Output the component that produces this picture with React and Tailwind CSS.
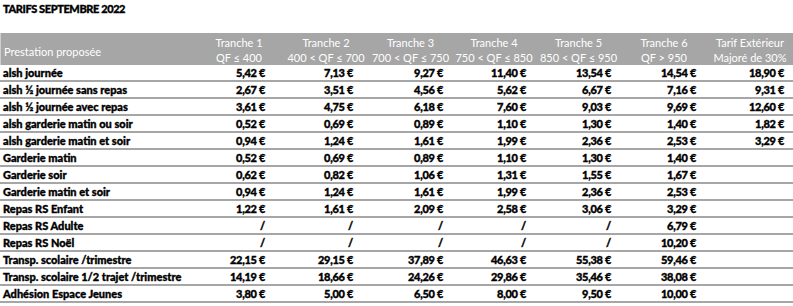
import React from 'react';

const cols = [
    { title: 'Tranche 1', sub: 'QF ≤ 400', w: 'w-[88px]', pad: 'pr-[18px]' },
    { title: 'Tranche 2', sub: '400 < QF ≤ 700', w: 'w-[86px]', pad: 'pr-[16px]' },
    { title: 'Tranche 3', sub: '700 < QF ≤ 750', w: 'w-[83px]', pad: 'pr-[9px]' },
    { title: 'Tranche 4', sub: '750 < QF ≤ 850', w: 'w-[84px]', pad: 'pr-[10px]' },
    { title: 'Tranche 5', sub: '850 < QF ≤ 950', w: 'w-[85px]', pad: 'pr-[10px]' },
    { title: 'Tranche 6', sub: 'QF > 950', w: 'w-[86px]', pad: 'pr-[11px]' },
    { title: 'Tarif Extérieur', sub: 'Majoré de 30%', w: 'w-[86px]', pad: 'pr-[9px]' },
];

const rows = [
    ['alsh journée', '5,42 €', '7,13 €', '9,27 €', '11,40 €', '13,54 €', '14,54 €', '18,90 €'],
    ['alsh ½ journée sans repas', '2,67 €', '3,51 €', '4,56 €', '5,62 €', '6,67 €', '7,16 €', '9,31 €'],
    ['alsh ½ journée avec repas', '3,61 €', '4,75 €', '6,18 €', '7,60 €', '9,03 €', '9,69 €', '12,60 €'],
    ['alsh garderie matin ou soir', '0,52 €', '0,69 €', '0,89 €', '1,10 €', '1,30 €', '1,40 €', '1,82 €'],
    ['alsh garderie matin et soir', '0,94 €', '1,24 €', '1,61 €', '1,99 €', '2,36 €', '2,53 €', '3,29 €'],
    ['Garderie matin', '0,52 €', '0,69 €', '0,89 €', '1,10 €', '1,30 €', '1,40 €', ''],
    ['Garderie soir', '0,62 €', '0,82 €', '1,06 €', '1,31 €', '1,55 €', '1,67 €', ''],
    ['Garderie matin et soir', '0,94 €', '1,24 €', '1,61 €', '1,99 €', '2,36 €', '2,53 €', ''],
    ['Repas RS Enfant', '1,22 €', '1,61 €', '2,09 €', '2,58 €', '3,06 €', '3,29 €', ''],
    ['Repas RS Adulte', '/', '/', '/', '/', '/', '6,79 €', ''],
    ['Repas RS Noël', '/', '/', '/', '/', '/', '10,20 €', ''],
    ['Transp. scolaire /trimestre', '22,15 €', '29,15 €', '37,89 €', '46,63 €', '55,38 €', '59,46 €', ''],
    ['Transp. scolaire 1/2 trajet /trimestre', '14,19 €', '18,66 €', '24,26 €', '29,86 €', '35,46 €', '38,08 €', ''],
    ['Adhésion Espace Jeunes', '3,80 €', '5,00 €', '6,50 €', '8,00 €', '9,50 €', '10,00 €', ''],
];

export default function App() {
    return (
        <div className="w-[793px] h-[306px] bg-white overflow-hidden text-black" style={{ fontFamily: 'Lato, "Liberation Sans", sans-serif' }}>
            <div className="h-[33px] pl-[3px] pt-[2px] text-[11px] font-black tracking-[-0.4px] leading-[13px] [-webkit-text-stroke:0.35px_black]">TARIFS SEPTEMBRE 2022</div>
            {/* header */}
            <div className="flex h-[32px] bg-[#a6a6a6] text-white text-[11px] leading-[15px] border-l border-[#cfcfcf]">
                <div className="w-[194px] flex items-center pl-[3px] pt-[5px]">Prestation proposée</div>
                {cols.map(c => (
                    <div key={c.title} className={`${c.w} flex flex-col items-center justify-center pt-[1px] whitespace-nowrap`}>
                        <span>{c.title}</span>
                        <span>{c.sub}</span>
                    </div>
                ))}
            </div>
            {rows.map(r => (
                <div key={r[0]} className="flex h-[17px] border-b-2 border-[#a6a6a6] text-[11px] font-black leading-[16px] [-webkit-text-stroke:0.35px_black]">
                    <div className="w-[195px] pl-[3px] whitespace-nowrap">{r[0]}</div>
                    {cols.map((c, i) => (
                        <div key={c.title} className={`${c.w} ${c.pad} text-right whitespace-nowrap tracking-[-0.3px]`}>{r[i + 1]}</div>
                    ))}
                </div>
            ))}
        </div>
    );
}
